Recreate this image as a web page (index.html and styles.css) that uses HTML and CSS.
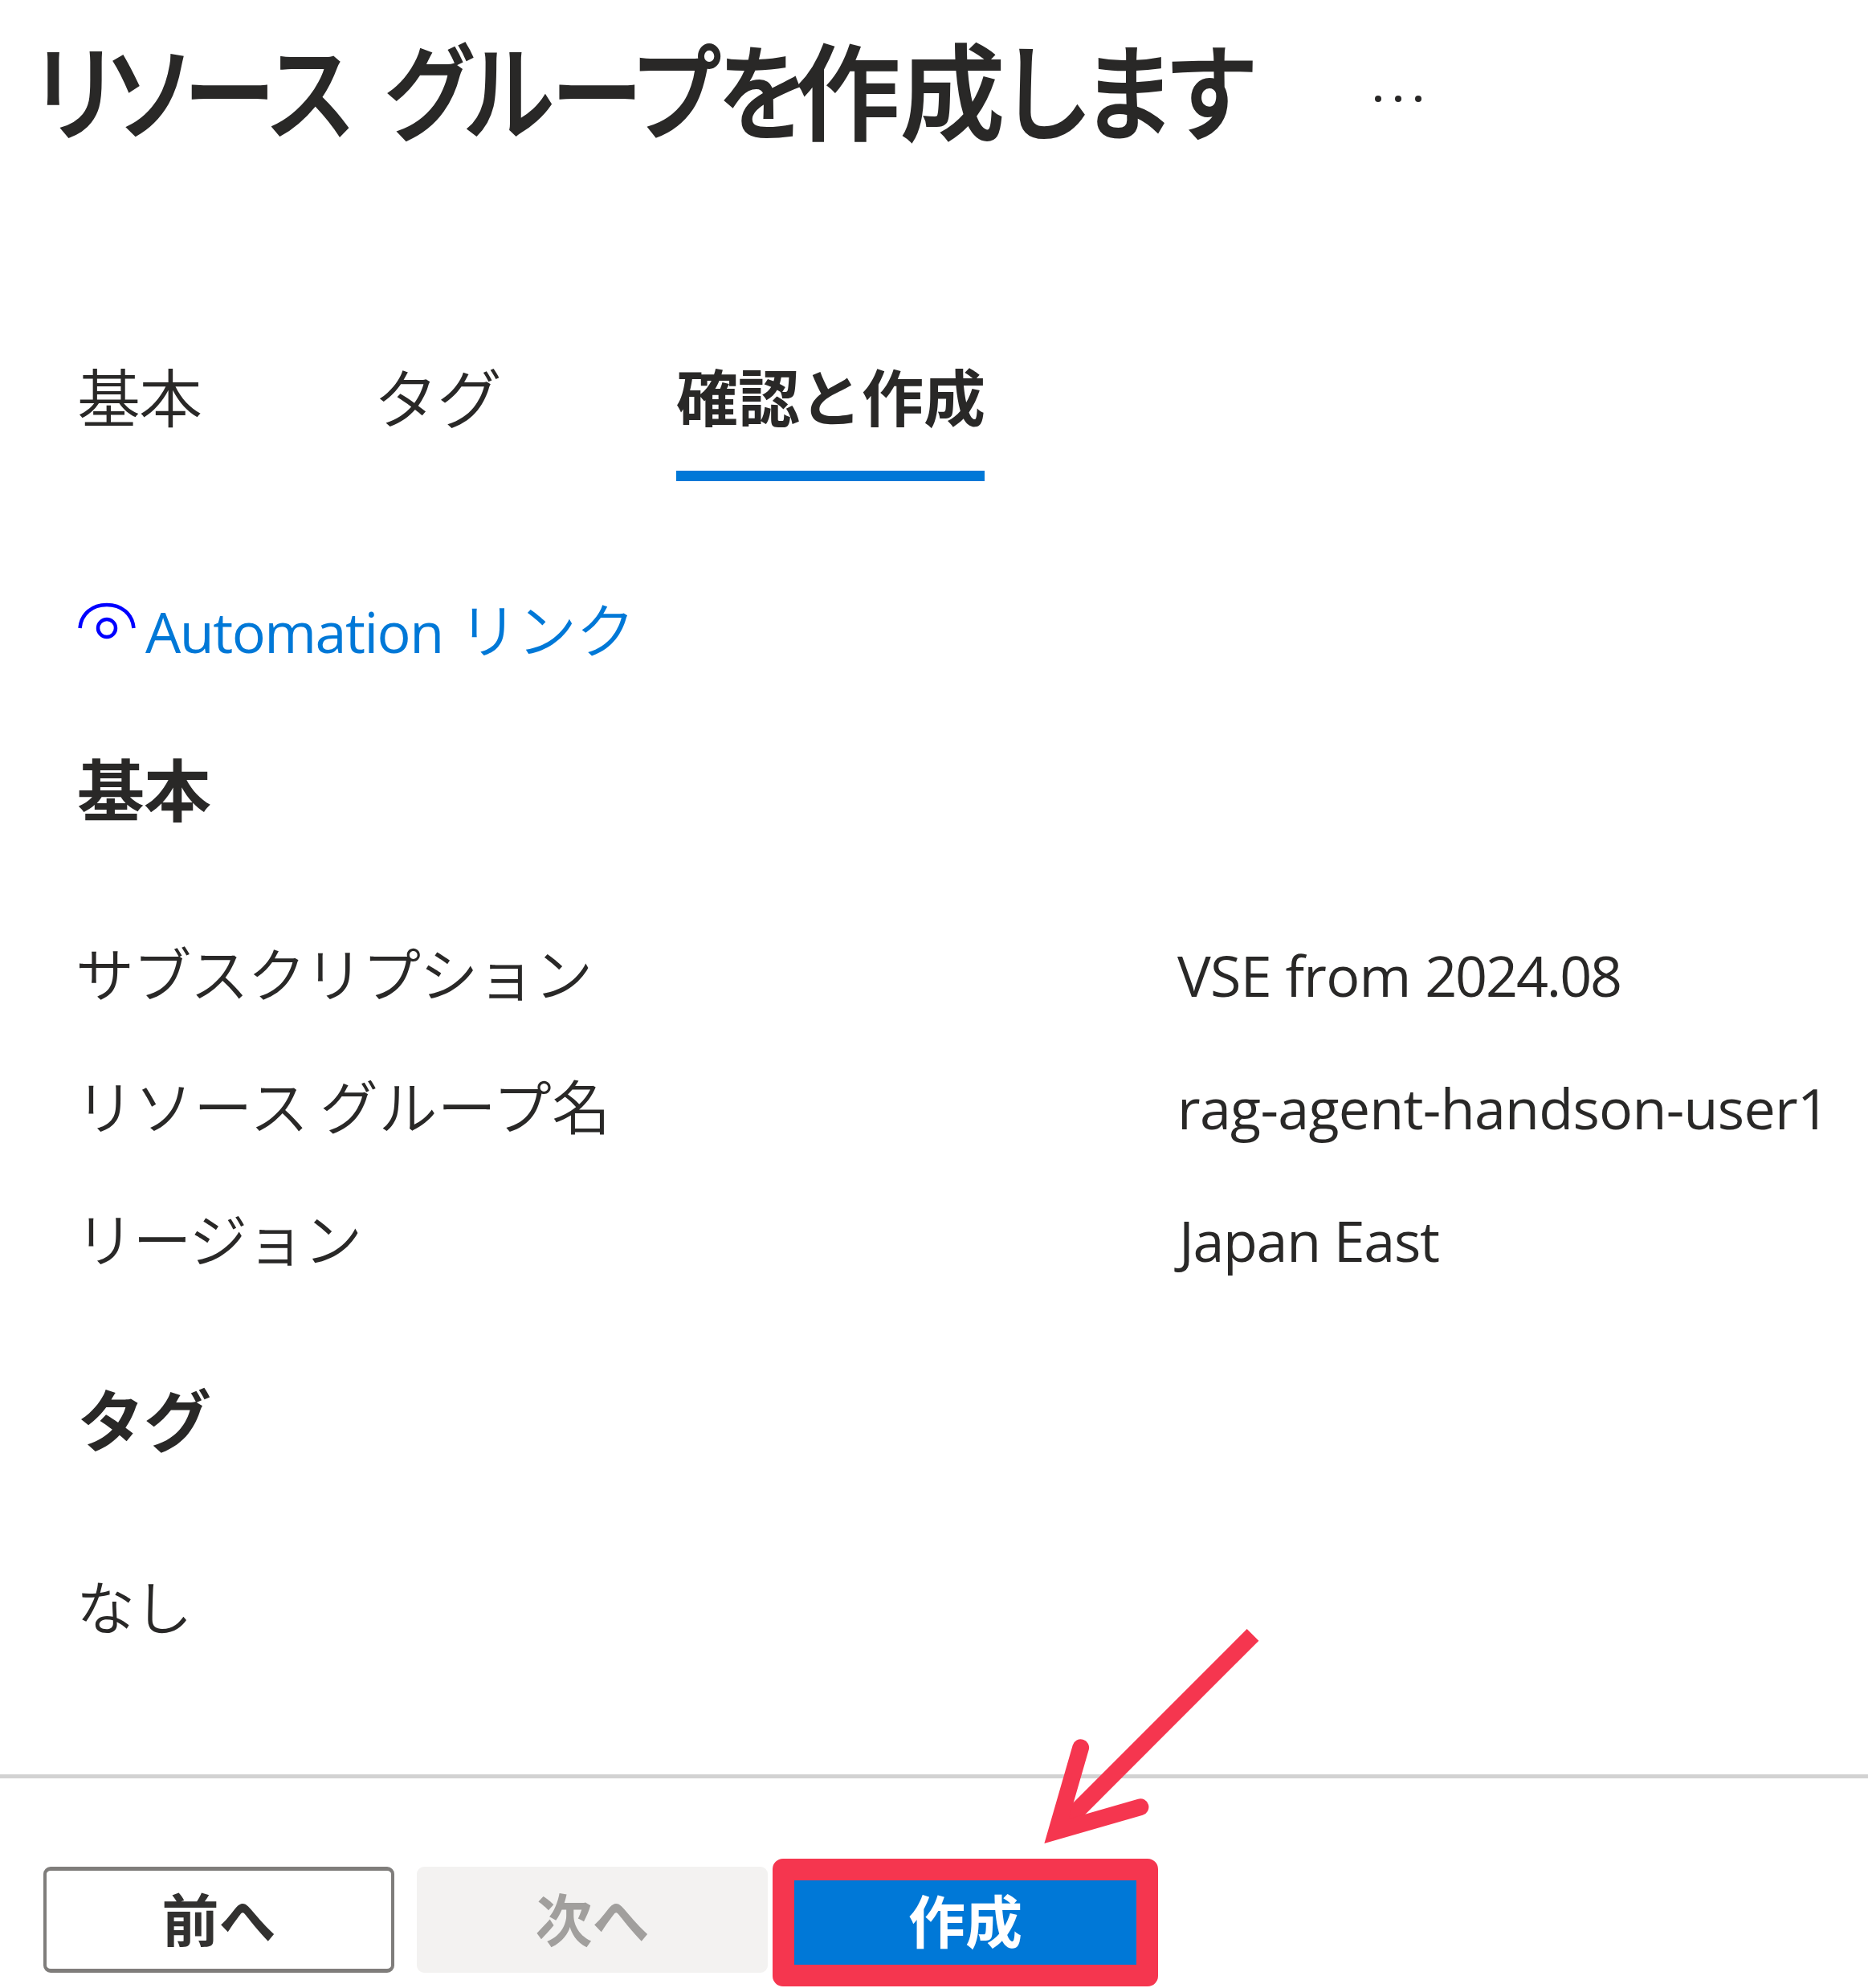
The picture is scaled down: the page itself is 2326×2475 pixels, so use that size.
FILE: index.html
```html
<!DOCTYPE html>
<html lang="ja">
<head>
<meta charset="utf-8">
<title>リソース グループを作成します</title>
<link rel="stylesheet" href="styles.css">
</head>
<body>
<main class="blade">
  <header class="blade-header">
    <h1 class="title"><span class="title-part title-resource">リソース </span><span class="title-part title-group">グループを</span><span class="title-part title-make">作成</span><span class="title-part title-end">します</span></h1>
    <div class="more" aria-label="その他"><i></i><i></i><i></i></div>
  </header>
  <nav class="tabs">
    <a class="tab">基本</a>
    <a class="tab tab-tags">タグ</a>
    <a class="tab tab-active">確認と作成</a>
  </nav>
  <a class="automation">
    <svg class="eye" width="72" height="50" viewBox="0 0 72 50" fill="none" stroke="#0000ff" stroke-width="4.5"><path d="M2.5 33C4 15 18 4 36 4S68 15 69.500 33"/><circle cx="36" cy="33" r="11"/></svg>
    <span class="automation-latin">Automation</span><span class="automation-kana">リンク</span>
  </a>
  <h2 class="section">基本</h2>
  <dl class="summary">
    <dt>サブスクリプション</dt><dd>VSE from <span class="digits">2024.08</span></dd>
    <dt><span class="name-a">リソース </span><span class="name-b">グループ名</span></dt><dd>rag-agent-handson-user1</dd>
    <dt>リージョン</dt><dd class="value-region">Japan East</dd>
  </dl>
  <h2 class="section section-tags">タグ</h2>
  <p class="none">なし</p>
</main>
<footer class="actions">
  <button class="btn btn-prev">前へ</button>
  <button class="btn btn-next" disabled>次へ</button>
  <button class="btn btn-create">作成</button>
</footer>
<svg class="arrow" width="290" height="290" viewBox="1290 2020 290 290" fill="none" stroke="#f5364f"><path d="M1560 2035.400L1315.600 2279.800" stroke-width="20.800"/><path d="M1345.700 2175.700L1315.600 2279.800L1420 2249.700" stroke-width="20.800" stroke-linecap="round" stroke-linejoin="miter"/></svg>
</body>
</html>
```
FILE: styles.css
```css
* { box-sizing: border-box; }
body {
  margin: 0;
  width: 2326px;
  height: 2475px;
  position: relative;
  overflow: hidden;
  background: #fff;
  color: #292827;
  font-family: "Open Sans", "Noto Sans CJK JP", sans-serif;
  font-size: 70px;
}
h1, h2, p, dl, dd { margin: 0; }
.blade { height: 2209px; padding: 34px 0 0 97px; }
.blade-header { display: flex; align-items: center; height: 160px; margin-left: -53px; }
.title {
  display: flex;
  width: 1668px;
  font-size: 130px;
  font-weight: 500;
  line-height: 158px;
  white-space: pre;
  font-feature-settings: "palt";
  -webkit-text-stroke: 2px #292827;
}
.title-part { flex: none; transform-origin: left center; }
.title-resource { width: 436px; letter-spacing: -2px; transform: scaleX(.883); }
.title-group { width: 511px; letter-spacing: -2px; transform: scaleX(.879); }
.title-make { width: 262px; }
.title-end { letter-spacing: -2px; transform: scaleX(.9); }
.more { display: flex; gap: 17px; padding-top: 17px; }
.more i { width: 8px; height: 8px; border-radius: 50%; background: #292827; }
.tabs { display: flex; margin-top: 251px; }
.tab { width: 373px; height: 154px; font-size: 79px; line-height: 102px; font-weight: 350; letter-spacing: -2px; white-space: nowrap; text-indent: -1px; }
.tab-tags { font-size: 81px; text-indent: -5px; }
.tab-active { width: 384px; margin-left: -1px; font-size: 77px; letter-spacing: 0; font-weight: 700; text-indent: 0; border-bottom: 13px solid #0078d7; }
.automation { display: flex; height: 100px; margin-top: 137px; line-height: 100px; color: #0078d7; }
.eye { margin: 13px 12px 0 0; }
.automation-latin { width: 390px; letter-spacing: -1.5px; }
.automation-kana { font-size: 74px; line-height: 98px; letter-spacing: -1px; font-weight: 350; }
.section { margin: 98px 0 0 -1px; font-size: 84px; font-weight: 700; line-height: 100px; letter-spacing: -1px; }
.summary { display: grid; grid-template-columns: 1369px 1fr; grid-auto-rows: 165px; margin-top: 96px; line-height: 165px; }
.summary dt { display: flex; margin-left: -3px; font-size: 73px; font-weight: 350; letter-spacing: -1.6px; white-space: pre; }
.summary dd { padding-top: 2px; letter-spacing: -.7px; white-space: nowrap; }
.summary .value-region { padding-left: 2px; letter-spacing: -1.3px; }
.digits { letter-spacing: -2.1px; }
.name-a { width: 304px; letter-spacing: .6px; }
.name-b { letter-spacing: .4px; }
.section-tags { margin-top: 94px; }
.none { margin: 132px 0 0 -2px; font-size: 73px; line-height: 100px; font-weight: 350; letter-spacing: -1.2px; }
.actions { display: flex; height: 266px; padding: 100px 0 0 54px; border-top: 5px solid #d2d2d2; }
.btn {
  width: 437px;
  height: 132px;
  padding: 0;
  border: 4px solid #7f7d7b;
  border-width: 5px 4px;
  border-radius: 9px;
  background: #fff;
  color: #323130;
  font: 700 71px/120px "Open Sans", "Noto Sans CJK JP", sans-serif;
}
.btn-prev { margin-top: 10px; }
.btn-next { margin: 10px 0 0 28px; background: #f3f2f1; border-color: #f3f2f1; color: #a19f9d; }
.btn-create {
  width: 480px;
  height: 159px;
  margin-left: 6px;
  border: 27px solid #f5364f;
  border-radius: 13px;
  background: #0078d7;
  color: #fff;
  line-height: 101px;
  padding-bottom: 4px;
}
.arrow { position: absolute; left: 1290px; top: 2020px; }
```
